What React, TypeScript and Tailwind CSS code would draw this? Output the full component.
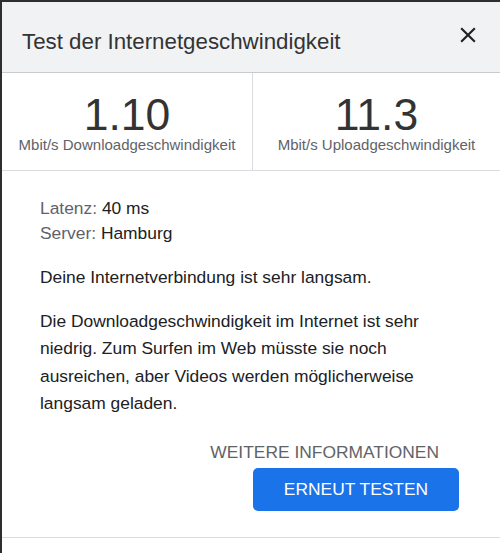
import React from 'react';

// Messwerte
const results = [
  { value: '1.10', label: 'Mbit/s Downloadgeschwindigkeit' },
  { value: '11.3', label: 'Mbit/s Uploadgeschwindigkeit' },
];

const CloseIcon: React.FC = () => (
  <svg width="26" height="26" viewBox="0 0 24 24" fill="#202124">
    <path d="M19 6.41L17.59 5 12 10.59 6.41 5 5 6.41 10.59 12 5 17.59 6.41 19 12 13.41 17.59 19 19 17.59 13.41 12z" />
  </svg>
);

const App: React.FC = () => {
  return (
    <div
      className="w-[500px] h-[553px] flex bg-white overflow-hidden"
      style={{ fontFamily: '"Liberation Sans", Arial, sans-serif' }}
    >
      {/* linker Rand */}
      <div className="w-[2px] bg-[#2e2e2e] shrink-0" />

      <div className="flex-1 flex flex-col">
        <div className="h-[2px] bg-[#2e2e2e] shrink-0" />

        {/* Kopfzeile */}
        <div className="h-[71px] bg-[#f1f2f4] border-b border-[#c9cacc] flex justify-between shrink-0">
          <h1 className="pl-[20px] pt-[26px] text-[22.3px] leading-[28px] text-[#333]">
            Test der Internetgeschwindigkeit
          </h1>
          <button className="mr-[19px] mt-[20px] self-start">
            <CloseIcon />
          </button>
        </div>

        {/* Ergebnisse */}
        <div className="grid grid-cols-[251px_1fr] h-[98px] border-b border-[#dadce0] shrink-0">
          {results.map((r, i) => (
            <div
              key={r.label}
              className={`flex flex-col items-center pt-[20px] ${i === 0 ? 'border-r border-[#dadce0]' : ''}`}
            >
              <span className="text-[44.5px] leading-[43px] text-[#333]">{r.value}</span>
              <span className="text-[15px] leading-[17px] text-[#5f6368]">{r.label}</span>
            </div>
          ))}
        </div>

        {/* Details */}
        <div className="pl-[38px] pr-[41px] pt-[24.5px] pb-[26px] border-b border-[#dadce0] text-[17.4px] text-[#202124]">
          <div className="leading-[25.5px]">
            <div>
              <span className="text-[#5f6368]">Latenz:</span> 40 ms
            </div>
            <div>
              <span className="text-[#5f6368]">Server:</span> Hamburg
            </div>
          </div>
          <p className="mt-[17px] leading-[27.4px]">Deine Internetverbindung ist sehr langsam.</p>
          <p className="mt-[17px] leading-[27.4px]">
            Die Downloadgeschwindigkeit im Internet ist sehr niedrig. Zum Surfen im Web müsste sie noch
            ausreichen, aber Videos werden möglicherweise langsam geladen.
          </p>

          <div className="flex flex-col items-end mt-[24.7px]">
            <button className="pr-[20px] leading-[20px] text-[#5f6368] uppercase">
              Weitere Informationen
            </button>
            <button className="mt-[5.4px] w-[206px] h-[43px] rounded-[5px] bg-[#1a73e8] text-white uppercase">
              Erneut testen
            </button>
          </div>
        </div>

        <div className="flex-1 bg-white" />
      </div>
    </div>
  );
};

export default App;
